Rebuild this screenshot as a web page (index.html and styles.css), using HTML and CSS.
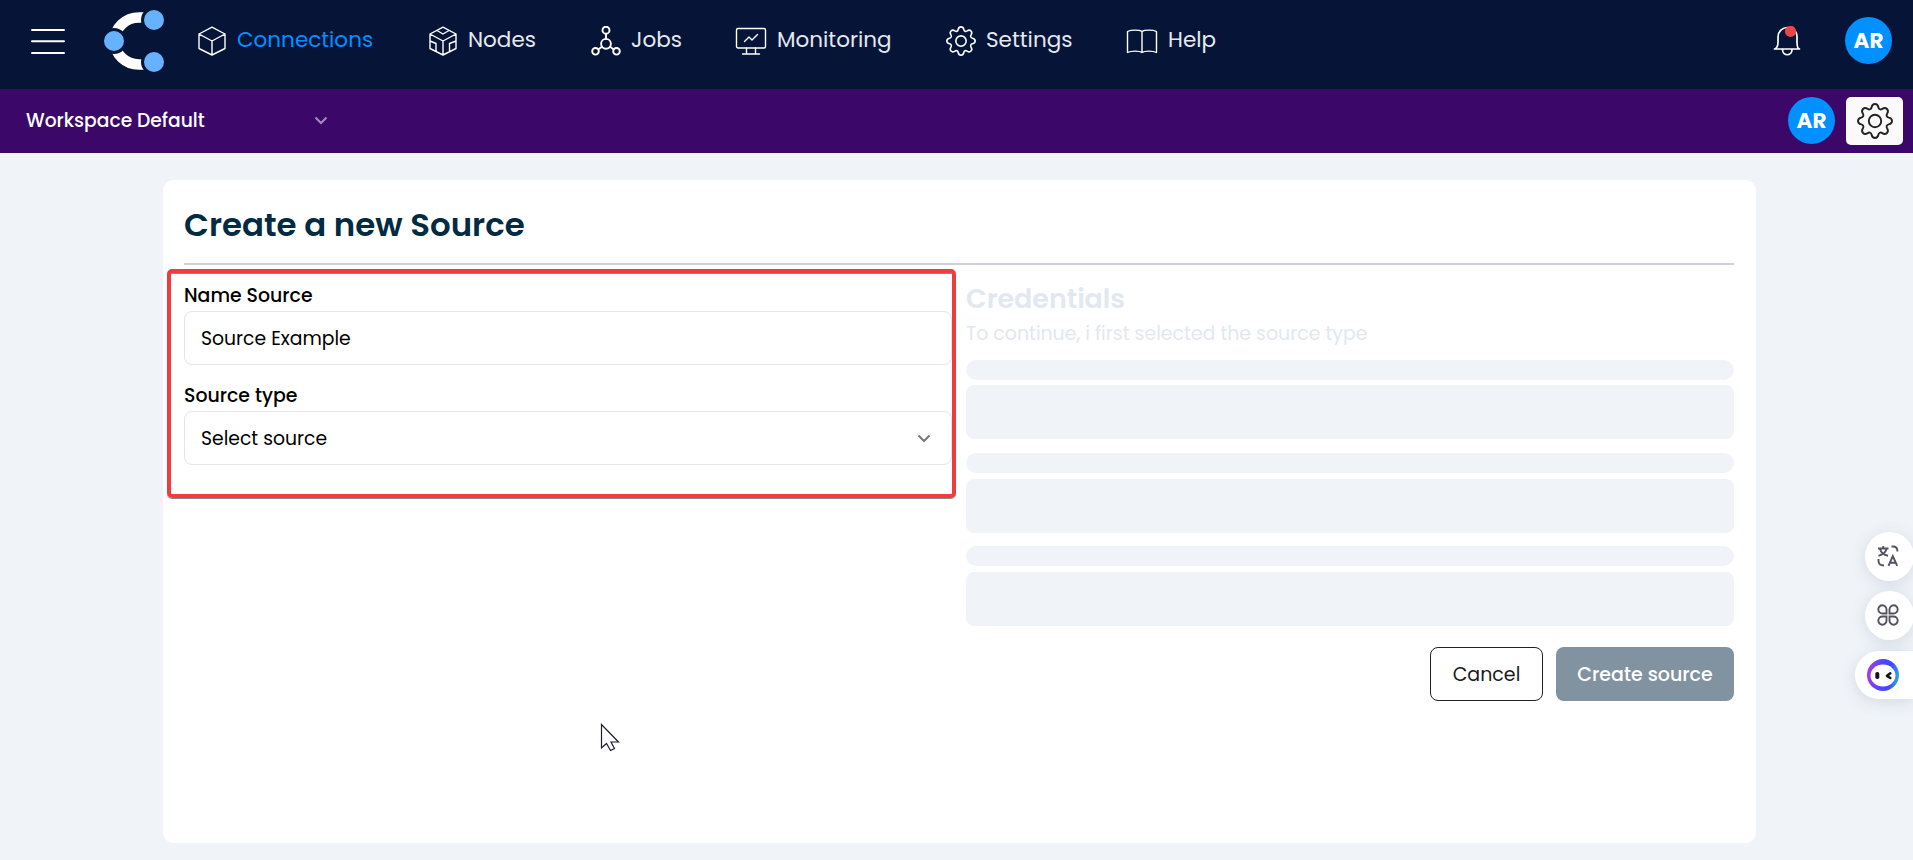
FILE: index.html
```html
<!DOCTYPE html>
<html lang="en">
<head>
<meta charset="utf-8">
<title>Create a new Source</title>
<link rel="stylesheet" href="styles.css">
</head>
<body>
<svg class="defs" width="0" height="0" aria-hidden="true">
  <symbol id="gear" viewBox="0 0 36 36">
    <path d="M18 1C20 1 21 2.300 21.400 4.200C21.800 6.300 23.500 7 25.300 5.900C27 4.800 28.600 4.600 30 6C31.400 7.400 31.200 9 30.100 10.700C29 12.500 29.700 14.200 31.800 14.600C33.700 15 35 16 35 18C35 20 33.700 21 31.800 21.400C29.700 21.800 29 23.500 30.100 25.300C31.200 27 31.400 28.600 30 30C28.600 31.400 27 31.200 25.300 30.100C23.500 29 21.800 29.700 21.400 31.800C21 33.700 20 35 18 35C16 35 15 33.700 14.600 31.800C14.200 29.700 12.500 29 10.700 30.100C9 31.200 7.400 31.400 6 30C4.600 28.600 4.800 27 5.900 25.300C7 23.500 6.300 21.800 4.200 21.400C2.300 21 1 20 1 18C1 16 2.300 15 4.200 14.600C6.300 14.200 7 12.500 5.900 10.700C4.800 9 4.600 7.400 6 6C7.400 4.600 9 4.800 10.700 5.900C12.500 7 14.200 6.300 14.600 4.200C15 2.300 16 1 18 1Z"/>
    <circle cx="18" cy="18" r="6.200"/>
  </symbol>
</svg>

<header class="topbar">
  <svg class="menu" width="36" height="28" viewBox="0 0 36 28"><path d="M2 3h32M2 14.300h32M2 26h32"/></svg>
  <svg class="logo" width="62" height="64" viewBox="0 0 62 64">
    <path class="arc" d="M42 7.500H37A24.500 23.500 0 0 0 37 54.500H42"/>
    <g class="dots"><circle cx="52" cy="10" r="11.500"/><circle cx="12" cy="31" r="11.500"/><circle cx="52" cy="52" r="11.500"/></g>
  </svg>
  <nav class="nav">
    <a class="item connections active">
      <svg width="30" height="30" viewBox="0 0 30 30"><path d="M15 1.200L28 8V22.500L15 29L2 22.500V8ZM2 8L15 15L28 8M15 15V29"/></svg>
      <span>Connections</span></a>
    <a class="item nodes">
      <svg width="30" height="30" viewBox="0 0 30 30"><path d="M15 1.200L28 8V22.500L15 29L2 22.500V8ZM2 8L15 15L28 8M15 15V29M9 4.500L15 8L21 4.500M2 15L8 17.500V25.500M28 15L21.500 17.500V25.500"/></svg>
      <span>Nodes</span></a>
    <a class="item jobs">
      <svg class="bold" width="30" height="30" viewBox="0 0 30 30"><circle cx="15" cy="4.200" r="3.500"/><circle cx="15" cy="17.800" r="4.900"/><circle cx="4.500" cy="25.300" r="3.300"/><circle cx="25.500" cy="25.300" r="3.300"/><path d="M15 7.700V12.900M11 20.800L7.500 23.200M19 20.800L22.500 23.200"/></svg>
      <span>Jobs</span></a>
    <a class="item monitoring">
      <svg width="32" height="30" viewBox="0 0 32 30"><rect x="1.500" y="2.500" width="29" height="19.500" rx="1.500"/><path d="M11.500 22V28M20.500 22V28M7.500 28H24.500M9.500 15.500L14 11L17 14L22.500 8.500"/></svg>
      <span>Monitoring</span></a>
    <a class="item settings">
      <svg class="gear" width="30" height="30"><use href="#gear"/></svg>
      <span>Settings</span></a>
    <a class="item help">
      <svg width="32" height="30" viewBox="0 0 32 30"><path d="M16 5.500C13.500 3.700 5 3.700 1.500 5.500V26.500C5 24.600 13.500 24.600 16 26.500C18.500 24.600 27 24.600 30.500 26.500V5.500C27 3.700 18.500 3.700 16 5.500V26.500"/></svg>
      <span>Help</span></a>
  </nav>
  <svg class="bell" width="30" height="30" viewBox="0 0 30 30">
    <path d="M2.500 23H27.500C25.300 22.500 25 20 25 16V11C25 5.500 20.500 1.500 15.500 1.500C10.500 1.500 6 5.500 6 11V16C6 20 5 22.500 2.500 23ZM10.500 23.500C10.500 30.500 20 30.500 20 23.500"/>
    <circle cx="18.500" cy="5.400" r="5.600"/>
  </svg>
  <span class="avatar">AR</span>
</header>

<div class="workspace">
  <span class="ws-name">Workspace Default</span>
  <svg class="chevron" width="14" height="9" viewBox="0 0 14 9"><path d="M1.500 1.500L7 7L12.500 1.500"/></svg>
  <span class="avatar">AR</span>
  <button class="gear-btn"><svg class="gear" width="36" height="36"><use href="#gear"/></svg></button>
</div>

<main class="card">
  <h1><span>Create a new Source</span></h1>
  <div class="columns">
    <section class="form">
      <div class="highlight"></div>
      <label><span>Name Source</span></label>
      <div class="field"><span>Source Example</span></div>
      <label><span>Source type</span></label>
      <div class="field"><span>Select source</span>
        <svg class="chevron dark" width="14" height="9" viewBox="0 0 14 9"><path d="M1.500 1.500L7 7L12.500 1.500"/></svg></div>
    </section>
    <section class="credentials">
      <h2><span>Credentials</span></h2>
      <p><span>To continue, i first selected the source type</span></p>
      <div class="bones">
        <div class="bone-label"></div><div class="bone-field"></div>
        <div class="bone-label"></div><div class="bone-field"></div>
        <div class="bone-label"></div><div class="bone-field"></div>
      </div>
      <div class="actions">
        <button class="cancel"><span>Cancel</span></button>
        <button class="create"><span>Create source</span></button>
      </div>
    </section>
  </div>
</main>

<div class="float translate">
  <svg width="22" height="22" viewBox="0 0 22 22"><path d="M1 3.500H11.500M6.200 1V3.500M9.500 4C8.500 7.500 6 9.500 1.500 10.800M3 4C4 7.500 7 10 11 10.800M14.500 1.500H16C19 1.500 20.500 3.500 20.500 6.500M1.500 14V16C1.500 19 3.500 20.500 7 20.500M11.500 20.800L15.800 11L20.200 20.800M13 17.800H18.600"/></svg>
</div>
<div class="float apps">
  <svg width="22" height="22" viewBox="0 0 22 22"><path d="M9.500 9.500H5.500A4.100 4.100 0 1 1 9.500 5.500ZM12.500 9.500V5.500A4.100 4.100 0 1 1 16.500 9.500ZM9.500 12.500V16.500A4.100 4.100 0 1 1 5.500 12.500ZM12.500 12.500H16.500A4.100 4.100 0 1 1 12.500 16.500Z"/></svg>
</div>
<div class="float bot">
  <svg width="32" height="32" viewBox="0 0 32 32">
    <defs><linearGradient id="ring" x1="0" y1=".6" x2="1" y2=".75"><stop offset="0" stop-color="#a43be8"/><stop offset=".4" stop-color="#5048f8"/><stop offset=".7" stop-color="#4545fa"/><stop offset="1" stop-color="#28b8e0"/></linearGradient></defs>
    <circle cx="16" cy="16" r="16" fill="url(#ring)"/><ellipse cx="16" cy="16.500" rx="12.500" ry="11" fill="#fff"/>
    <rect x="8.300" y="13" width="4" height="7" rx="1.800" fill="#151515"/><path d="M23.300 14.300L20 16.800L23.300 19" fill="none" stroke="#151515" stroke-width="2.600" stroke-linecap="round" stroke-linejoin="round"/>
  </svg>
</div>
<svg class="cursor" width="20" height="30" viewBox="0 0 20 30"><path d="M1.500 1.500V25L6.500 20.500L10.500 27.500L14.500 25.500L11 19H18.500Z"/></svg>
</body>
</html>
```
FILE: styles.css
```css
* { box-sizing: border-box; }
body {
  margin: 0;
  height: 860px;
  overflow: hidden;
  position: relative;
  background: #f0f4f9;
  font-family: Poppins, Inter, "Open Sans", sans-serif;
  color: #000;
}
.defs { position: absolute; }
svg { display: block; flex: none; fill: none; }
button { font: inherit; padding: 0; border: 0; }
span { white-space: nowrap; }

.topbar {
  height: 89px;
  padding: 0 21px 8px 30px;
  display: flex;
  align-items: center;
  background: #061438;
}
.menu { stroke: #fff; stroke-width: 2; stroke-linecap: round; }
.logo { margin: 2px 0 0 36px; }
.arc { stroke: #fff; stroke-width: 10.500; }
.dots { fill: #66b2ff; stroke: #061438; stroke-width: 3; }
.nav { display: flex; align-items: center; margin-left: 33px; }
.item { display: flex; align-items: center; gap: 10px; font-size: 21.500px; line-height: 30px; color: #e4e9f0; }
.item svg { stroke: #fff; stroke-width: 1.400; stroke-linejoin: round; stroke-linecap: round; }
.item svg.gear { stroke-width: 1.900; }
.item svg.bold { stroke-width: 1.900; }
.item span { margin-top: -2px; }
.item.active { color: #0090ff; }
.connections { width: 231px; }
.nodes { width: 163px; }
.jobs { width: 144px; }
.monitoring { width: 211px; }
.settings { width: 180px; }
.bell { margin-left: auto; stroke: #fff; stroke-width: 1.700; stroke-linejoin: round; }
.bell circle { fill: #ef4444; stroke: none; }
.avatar {
  width: 47px;
  height: 47px;
  padding-bottom: 1px;
  border-radius: 50%;
  background: #0090ff;
  color: #fff;
  font-size: 21.500px;
  font-weight: 700;
  display: flex;
  align-items: center;
  justify-content: center;
  flex: none;
}
.bell + .avatar { margin-left: 43px; }

.workspace {
  height: 64px;
  padding: 0 10px 1px 26px;
  display: flex;
  align-items: center;
  background: #3b0869;
  color: #fff;
}
.ws-name { width: 288px; margin-top: -1px; font-size: 18.700px; font-weight: 500; }
.chevron { stroke: #a58bbb; stroke-width: 2; }
.workspace .avatar { margin-left: auto; }
.gear-btn {
  width: 57px;
  height: 48px;
  margin-left: 11px;
  border-radius: 5px;
  background: #fafafa;
  display: flex;
  align-items: center;
  justify-content: center;
}
.gear-btn .gear { stroke: #222; stroke-width: 1.900; }

.card {
  width: 1593px;
  height: 663px;
  margin: 27px 0 0 163px;
  padding: 0 22px 0 21px;
  border-radius: 11px;
  background: #fff;
}
h1 {
  height: 85px;
  margin: 0;
  padding-top: 24px;
  border-bottom: 2px solid #cfd3d9;
  color: #012a43;
  font-size: 32.400px;
  font-weight: 600;
  line-height: 42px;
}
.columns { display: grid; grid-template-columns: 768px 768px; gap: 14px; }
.form { position: relative; padding-top: 16px; }
.highlight {
  position: absolute;
  left: -17px;
  top: 4px;
  width: 789px;
  height: 229px;
  border: 4px solid #f03c3c;
  border-radius: 5px;
  box-shadow: 0 1px 0 #8a8a8a, inset 0 1px 0 #8a8a8a;
}
label { display: block; height: 30px; font-size: 18.900px; font-weight: 500; line-height: 30px; }
.field {
  height: 54px;
  margin-bottom: 16px;
  padding: 0 26px 0 16px;
  border: 1px solid #e2e4e6;
  border-radius: 8px;
  font-size: 18.800px;
  display: flex;
  align-items: center;
  justify-content: space-between;
}
.dark { stroke: #777; margin-right: -6px; }
.credentials { padding-top: 15px; }
h2 { margin: 0; height: 38px; font-size: 26.900px; font-weight: 600; line-height: 38px; color: #e2e8f0; }
p { margin: 0; height: 42px; font-size: 18.900px; line-height: 31px; color: #e2e8f0; }
.bones { display: grid; grid-template-rows: 25px 68px 26px 67px 26px 54px; }
.bones div { background: #f0f4f9; }
.bone-label { height: 20px; border-radius: 10px; }
.bone-field { height: 54px; border-radius: 8px; }
.actions { display: flex; justify-content: flex-end; gap: 13px; margin-top: 21px; }
.actions button { height: 54px; border-radius: 8px; font-size: 19px; }
.actions .cancel { width: 113px; background: #fff; border: 1px solid #222; color: #1a1a1a; }
.actions .create { width: 178px; background: #8193a0; color: #fff; font-weight: 500; }

.float {
  position: absolute;
  right: -1px;
  width: 49px;
  height: 49px;
  padding: 0 3px 1px 0;
  border-radius: 50%;
  background: #fff;
  box-shadow: 0 3px 16px rgba(70, 90, 110, .16);
  display: flex;
  align-items: center;
  justify-content: center;
  stroke: #55525f;
  stroke-width: 1.900;
}
.translate { top: 532px; }
.apps { top: 591px; }
.bot { top: 651px; right: 0; width: 58px; height: 48px; border-radius: 24px 0 0 24px; padding: 0 2px 0 0; stroke: none; }
.cursor { position: absolute; left: 600px; top: 723px; fill: #fff; stroke: #1d1d2b; stroke-width: 1.200; }
```
